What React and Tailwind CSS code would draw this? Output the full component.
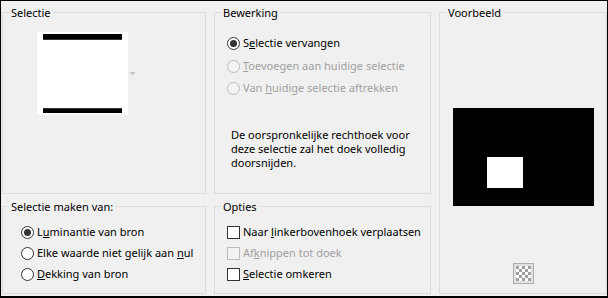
import React from "react";

function Radio({ checked, disabled }) {
  return (
    <span
      className={
        disabled
          ? "w-[13px] h-[13px] shrink-0 rounded-full border border-[#bcbcbc] bg-[#f3f3f3] flex items-center justify-center"
          : "w-[13px] h-[13px] shrink-0 rounded-full border border-[#333333] bg-white flex items-center justify-center"
      }
    >
      {checked && <span className="w-[7px] h-[7px] rounded-full bg-[#333333]" />}
    </span>
  );
}

function Check({ disabled }) {
  return (
    <span
      className={
        disabled
          ? "w-[13px] h-[13px] shrink-0 border border-[#bcbcbc] bg-[#f3f3f3]"
          : "w-[13px] h-[13px] shrink-0 border border-[#333333] bg-white"
      }
    />
  );
}

function Group({ title, className, children }) {
  return (
    <fieldset className={"border border-[#dcdcdc] p-0 m-0 min-w-0 " + className}>
      <legend className="ml-[6px] px-[2px] leading-[15px] text-black">{title}</legend>
      {children}
    </fieldset>
  );
}

function Row({ children, disabled, className = "" }) {
  return (
    <div
      className={
        "flex items-center gap-[3px] " +
        (disabled ? "text-[#a0a0a0] " : "text-black ") +
        className
      }
    >
      {children}
    </div>
  );
}

export default function App() {
  return (
    <div
      className="w-[608px] h-[298px] bg-[#f0f0f0] border-t border-l border-r border-b-2 border-black pt-[4px] pl-[1px] text-[11px] text-black"
      style={{ fontFamily: '"Noto Sans", "Liberation Sans", sans-serif' }}
    >
      <div className="grid grid-cols-[204px_217px_168px] grid-rows-[189px_95px] gap-x-[8px] gap-y-[5px]">
        <Group title="Selectie" className="h-[189px]">
          <div className="flex items-start ml-[34px] mt-[12px]">
            <svg width="91" height="83" viewBox="0 0 91 83">
              <rect x="0" y="0" width="91" height="83" fill="#ffffff" />
              <rect x="6" y="2" width="79" height="6" fill="#000000" />
              <rect x="6" y="7" width="79" height="1" fill="#333333" />
              <rect x="6" y="76" width="79" height="5" fill="#000000" />
              <rect x="6" y="76" width="79" height="1" fill="#333333" />
            </svg>
            <svg width="5" height="4" viewBox="0 0 5 4" className="ml-[2px] mt-[40px]">
              <rect x="0" y="0" width="5" height="1" fill="#c4c4c4" />
              <polygon points="0.5,1 4.5,1 2.5,3.5" fill="#c4c4c4" />
            </svg>
          </div>
        </Group>

        <Group title="Bewerking" className="h-[189px]">
          <div className="ml-[12px] mt-[12px] flex flex-col">
            <Row className="h-[23px]">
              <Radio checked />
              <span>
                S<u>e</u>lectie vervangen
              </span>
            </Row>
            <Row className="h-[22px]" disabled>
              <Radio disabled />
              <span>
                <u>T</u>oevoegen aan huidige selectie
              </span>
            </Row>
            <Row className="h-[22px]" disabled>
              <Radio disabled />
              <span>
                Van <u>h</u>uidige selectie aftrekken
              </span>
            </Row>
          </div>
          <p className="ml-[16px] mt-[29px] leading-[14px] text-black">
            De oorspronkelijke rechthoek voor
            <br />
            deze selectie zal het doek volledig
            <br />
            doorsnijden.
          </p>
        </Group>

        <Group title="Voorbeeld" className="row-span-2 h-[289px]">
          <div className="flex flex-col items-center">
            <svg width="141" height="98" viewBox="0 0 141 98" className="mt-[88px]">
              <rect x="0" y="0" width="141" height="98" fill="#000000" />
              <rect x="34" y="49" width="36" height="31" fill="#ffffff" />
            </svg>
            <div className="mt-[57px] w-[21px] h-[21px] border border-[#adadad] bg-[#e1e1e1] flex items-center justify-center">
              <svg width="15" height="15" viewBox="0 0 15 15">
                <rect x="0" y="0" width="15" height="15" fill="#ffffff" />
                <rect x="0" y="0" width="3" height="3" fill="#a0a0a0" />
                <rect x="6" y="0" width="3" height="3" fill="#a0a0a0" />
                <rect x="12" y="0" width="3" height="3" fill="#a0a0a0" />
                <rect x="3" y="3" width="3" height="3" fill="#a0a0a0" />
                <rect x="9" y="3" width="3" height="3" fill="#a0a0a0" />
                <rect x="0" y="6" width="3" height="3" fill="#a0a0a0" />
                <rect x="6" y="6" width="3" height="3" fill="#a0a0a0" />
                <rect x="12" y="6" width="3" height="3" fill="#a0a0a0" />
                <rect x="3" y="9" width="3" height="3" fill="#a0a0a0" />
                <rect x="9" y="9" width="3" height="3" fill="#a0a0a0" />
                <rect x="0" y="12" width="3" height="3" fill="#a0a0a0" />
                <rect x="6" y="12" width="3" height="3" fill="#a0a0a0" />
                <rect x="12" y="12" width="3" height="3" fill="#a0a0a0" />
              </svg>
            </div>
          </div>
        </Group>

        <Group title="Selectie maken van:" className="h-[95px]">
          <div className="ml-[18px] mt-[8px] flex flex-col">
            <Row className="h-[21px]">
              <Radio checked />
              <span>
                L<u>u</u>minantie van bron
              </span>
            </Row>
            <Row className="h-[21px]">
              <Radio />
              <span>
                Elke waarde niet gelijk aan <u>n</u>ul
              </span>
            </Row>
            <Row className="h-[21px]">
              <Radio />
              <span>
                <u>D</u>ekking van bron
              </span>
            </Row>
          </div>
        </Group>

        <Group title="Opties" className="h-[95px]">
          <div className="ml-[12px] mt-[8px] flex flex-col">
            <Row className="h-[21px]">
              <Check />
              <span>
                Naar <u>l</u>inkerbovenhoek verplaatsen
              </span>
            </Row>
            <Row className="h-[21px]" disabled>
              <Check disabled />
              <span>
                Af<u>k</u>nippen tot doek
              </span>
            </Row>
            <Row className="h-[21px]">
              <Check />
              <span>
                <u>S</u>electie omkeren
              </span>
            </Row>
          </div>
        </Group>
      </div>
    </div>
  );
}
